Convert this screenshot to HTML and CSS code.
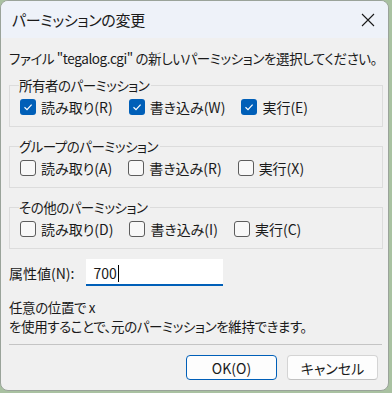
FILE: index.html
```html
<!DOCTYPE html>
<html lang="ja">
<head>
    <meta charset="UTF-8">
    <title>パーミッションの変更</title>
    <link rel="stylesheet" href="styles.css">
</head>
<body>
    <div class="window">
        <div class="titlebar">
            <span class="title">パーミッションの変更</span>
            <svg class="close" width="14" height="14" viewBox="0 0 14 14">
                <path d="M1 1 L13 13 M13 1 L1 13" stroke="#1a1a1a" stroke-width="1.1" fill="none"/>
            </svg>
        </div>

        <div class="content">
            <p class="prompt">ファイル "tegalog.cgi" の新しいパーミッションを選択してください。</p>

            <fieldset class="group">
                <legend>所有者のパーミッション</legend>
                <div class="checks">
                    <label class="check"><span class="box on"></span>読み取り(R)</label>
                    <label class="check"><span class="box on"></span>書き込み(W)</label>
                    <label class="check"><span class="box on"></span>実行(E)</label>
                </div>
            </fieldset>

            <fieldset class="group">
                <legend>グループのパーミッション</legend>
                <div class="checks">
                    <label class="check"><span class="box"></span>読み取り(A)</label>
                    <label class="check"><span class="box"></span>書き込み(R)</label>
                    <label class="check"><span class="box"></span>実行(X)</label>
                </div>
            </fieldset>

            <fieldset class="group">
                <legend>その他のパーミッション</legend>
                <div class="checks">
                    <label class="check"><span class="box"></span>読み取り(D)</label>
                    <label class="check"><span class="box"></span>書き込み(I)</label>
                    <label class="check"><span class="box"></span>実行(C)</label>
                </div>
            </fieldset>

            <div class="attr">
                <span class="attr-label">属性値(N):</span>
                <div class="textbox">700<span class="caret"></span></div>
            </div>

            <p class="note">任意の位置で x<br>を使用することで、元のパーミッションを維持できます。</p>

            <div class="separator"></div>

            <div class="buttons">
                <button class="btn default">OK(O)</button>
                <button class="btn">キャンセル</button>
            </div>
        </div>
    </div>
</body>
</html>
```

FILE: styles.css
```css
/* dialog */
body {
    margin: 0;
    background-color: #a9c1a1;
    font-family: "Noto Sans CJK JP", "Noto Sans", sans-serif;
    font-size: 14px;
    font-feature-settings: "palt";
    color: #1a1a1a;
}

.window {
    width: 389px;
    height: 391px;
    box-sizing: border-box;
    border: 1px solid #9aa39a;
    border-radius: 8px;
    background-color: #f0f0f0;
    overflow: hidden;
}

.titlebar {
    height: 37px;
    background-color: #eef2f9;
    display: flex;
    align-items: center;
    justify-content: space-between;
    padding: 0 13px 0 11px;
}

.title {
    font-size: 15px;
    letter-spacing: -0.3px;
}

.content {
    padding: 0 5px 0 8px;
}

.prompt {
    margin: 10px 0 7px;
    line-height: 20px;
    font-size: 13.5px;
    letter-spacing: -0.4px;
    white-space: nowrap;
}

.group {
    margin: 0 0 9px;
    padding: 2px 10px 9px;
    border: 1px solid #dcdcdc;
}

.group legend {
    padding: 0 2px 0 0;
    margin-left: -1px;
    line-height: 20px;
    font-size: 13.5px;
    letter-spacing: -0.5px;
}

.checks {
    display: flex;
    align-items: center;
    height: 20px;
}

.check {
    display: flex;
    align-items: center;
    gap: 5px;
    margin-right: 16px;
}

.box {
    width: 16px;
    height: 16px;
    box-sizing: border-box;
    border: 1px solid #5c5c5c;
    border-radius: 3px;
    background-color: #f8f8f8;
}

.box.on {
    border: none;
    background-color: #005fb8;
    background-image: url("data:image/svg+xml,%3Csvg xmlns='http://www.w3.org/2000/svg' width='16' height='16'%3E%3Cpath d='M4.5 8.3 L7 10.6 L11.6 5.6' stroke='white' stroke-width='1.2' fill='none'/%3E%3C/svg%3E");
}

.attr {
    display: flex;
    align-items: center;
    gap: 12px;
    margin-top: 10px;
}

.textbox {
    width: 137px;
    height: 27px;
    box-sizing: border-box;
    background-color: #ffffff;
    border-bottom: 2px solid #005fb8;
    padding: 3px 7px 0;
    line-height: 22px;
    display: flex;
    align-items: center;
}

.caret {
    width: 1px;
    height: 17px;
    background-color: #000000;
    margin-left: 1px;
}

.note {
    margin: 12px 0 8px;
    line-height: 19px;
    font-size: 13.5px;
    letter-spacing: -0.4px;
}

.separator {
    height: 1px;
    background-color: #c4c4c4;
    margin-right: 1px;
}

.buttons {
    display: flex;
    justify-content: flex-end;
    gap: 10px;
    padding: 10px 5px 0 0;
}

.btn {
    width: 91px;
    height: 25px;
    font-family: inherit;
    font-size: 14px;
    font-feature-settings: "palt";
    color: #1a1a1a;
    background-color: #fdfdfd;
    border: 1px solid #d4d4d4;
    border-bottom-color: #c2c2c2;
    border-radius: 4px;
    padding: 0;
}

.btn.default {
    border: 1px solid #005fb8;
}
```
